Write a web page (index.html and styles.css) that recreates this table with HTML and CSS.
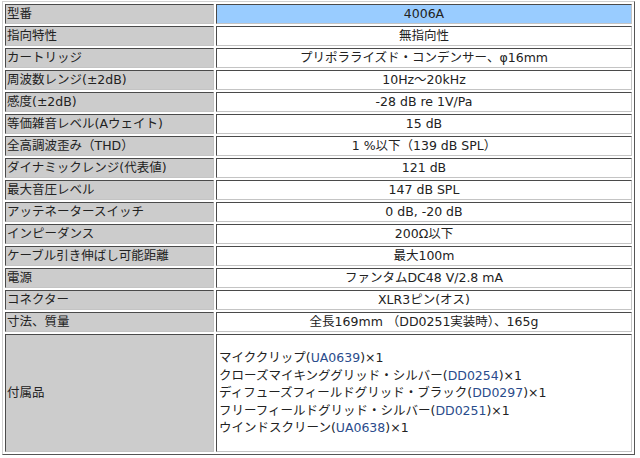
FILE: index.html
```html
<!DOCTYPE html>
<html lang="ja">
<head>
<meta charset="utf-8">
<link rel="stylesheet" href="styles.css">
</head>
<body>
<table class="spec">
<tr><th>型番</th><td class="model">4006A</td></tr>
<tr><th>指向特性</th><td>無指向性</td></tr>
<tr><th>カートリッジ</th><td>プリポラライズド・コンデンサー、φ16mm</td></tr>
<tr><th>周波数レンジ(±2dB)</th><td>10Hz～20kHz</td></tr>
<tr><th>感度(±2dB)</th><td>-28 dB re 1V/Pa</td></tr>
<tr><th>等価雑音レベル(Aウェイト)</th><td>15 dB</td></tr>
<tr><th>全高調波歪み（THD）</th><td>1 %以下（139 dB SPL）</td></tr>
<tr><th>ダイナミックレンジ(代表値)</th><td>121 dB</td></tr>
<tr><th>最大音圧レベル</th><td>147 dB SPL</td></tr>
<tr><th>アッテネータースイッチ</th><td>0 dB, -20 dB</td></tr>
<tr><th>インピーダンス</th><td>200Ω以下</td></tr>
<tr><th>ケーブル引き伸ばし可能距離</th><td>最大100m</td></tr>
<tr><th>電源</th><td>ファンタムDC48 V/2.8 mA</td></tr>
<tr><th>コネクター</th><td>XLR3ピン(オス)</td></tr>
<tr><th>寸法、質量</th><td>全長169mm （DD0251実装時）、165g</td></tr>
<tr class="tall"><th>付属品</th><td class="list">マイククリップ(<a href="#">UA0639</a>)×1<br>クローズマイキンググリッド・シルバー(<a href="#">DD0254</a>)×1<br>ディフューズフィールドグリッド・ブラック(<a href="#">DD0297</a>)×1<br>フリーフィールドグリッド・シルバー(<a href="#">DD0251</a>)×1<br>ウインドスクリーン(<a href="#">UA0638</a>)×1</td></tr>
</table>
</body>
</html>
```
FILE: styles.css
```css
html, body {
  margin: 0;
  padding: 0;
  background: #ffffff;
}
body {
  font-family: "DejaVu Sans", "Noto Sans CJK JP", sans-serif;
  font-size: 12.5px;
  color: #222222;
}
.spec {
  margin: 1px 0 0 2px;
  width: 633px;
  border-collapse: separate;
  border-spacing: 2px;
  border: 1px solid;
  border-color: #d0d0d0 #555555 #555555 #d0d0d0;
  table-layout: fixed;
}
.spec th, .spec td {
  height: 20px;
  box-sizing: border-box;
  padding: 0 1px;
  border: 1px solid;
  border-color: #4a4a4a #c4c4c4 #c4c4c4 #4a4a4a;
  line-height: 14px;
  font-weight: normal;
  white-space: nowrap;
}
.spec th {
  width: 209px;
  background: #cccccc;
  text-align: left;
}
.spec td {
  background: #ffffff;
  text-align: center;
}
.spec td.model {
  background: #99ccff;
}
.spec tr.tall th, .spec tr.tall td {
  height: 118px;
}
.spec td.list {
  text-align: left;
  padding-left: 2px;
  line-height: 17.5px;
}
.spec a {
  color: #2a4c8c;
  text-decoration: none;
}
```
